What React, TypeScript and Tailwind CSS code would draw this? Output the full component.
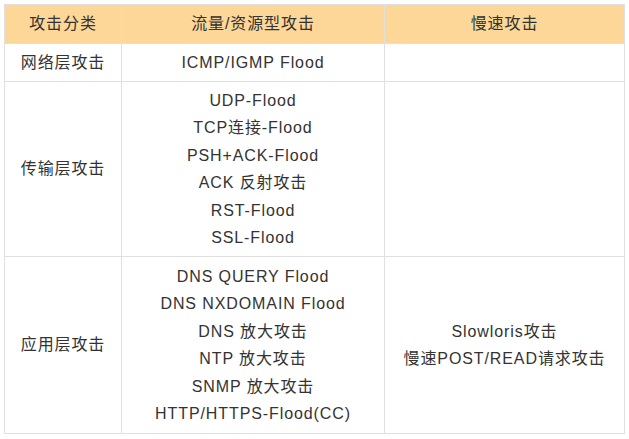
import React from "react";

const font = { fontFamily: '"Liberation Sans", "Noto Sans CJK SC", sans-serif' };

function Lines({ items }: { items: string[] }) {
  return (
    <>
      {items.map((t) => (
        <div key={t}>{t}</div>
      ))}
    </>
  );
}

export default function App() {
  const cell = "border border-[#e0e0e0] text-center align-middle";
  return (
    <div className="w-[629px] h-[439px] bg-white pt-[4px] pl-[4px]" style={font}>
      <table className="border-collapse w-[620px] table-fixed text-[16px] text-[#333] tracking-[0.9px]">
        <colgroup>
          <col className="w-[117px]" />
          <col className="w-[263px]" />
          <col className="w-[240px]" />
        </colgroup>
        <thead>
          <tr className="h-[39px] bg-[#fdd797]">
            <th className={`${cell} font-normal`}>攻击分类</th>
            <th className={`${cell} font-normal`}>流量/资源型攻击</th>
            <th className={`${cell} font-normal`}>慢速攻击</th>
          </tr>
        </thead>
        <tbody>
          <tr className="h-[38px]">
            <td className={cell}>网络层攻击</td>
            <td className={cell}>ICMP/IGMP Flood</td>
            <td className={cell}></td>
          </tr>
          <tr className="h-[175px]">
            <td className={cell}>传输层攻击</td>
            <td className={`${cell} leading-[27.5px]`}>
              <Lines items={["UDP-Flood", "TCP连接-Flood", "PSH+ACK-Flood", "ACK 反射攻击", "RST-Flood", "SSL-Flood"]} />
            </td>
            <td className={cell}></td>
          </tr>
          <tr className="h-[177px]">
            <td className={cell}>应用层攻击</td>
            <td className={`${cell} leading-[27.5px]`}>
              <Lines
                items={[
                  "DNS QUERY Flood",
                  "DNS NXDOMAIN Flood",
                  "DNS 放大攻击",
                  "NTP 放大攻击",
                  "SNMP 放大攻击",
                  "HTTP/HTTPS-Flood(CC)",
                ]}
              />
            </td>
            <td className={`${cell} leading-[27.5px]`}>
              <Lines items={["Slowloris攻击", "慢速POST/READ请求攻击"]} />
            </td>
          </tr>
        </tbody>
      </table>
    </div>
  );
}
